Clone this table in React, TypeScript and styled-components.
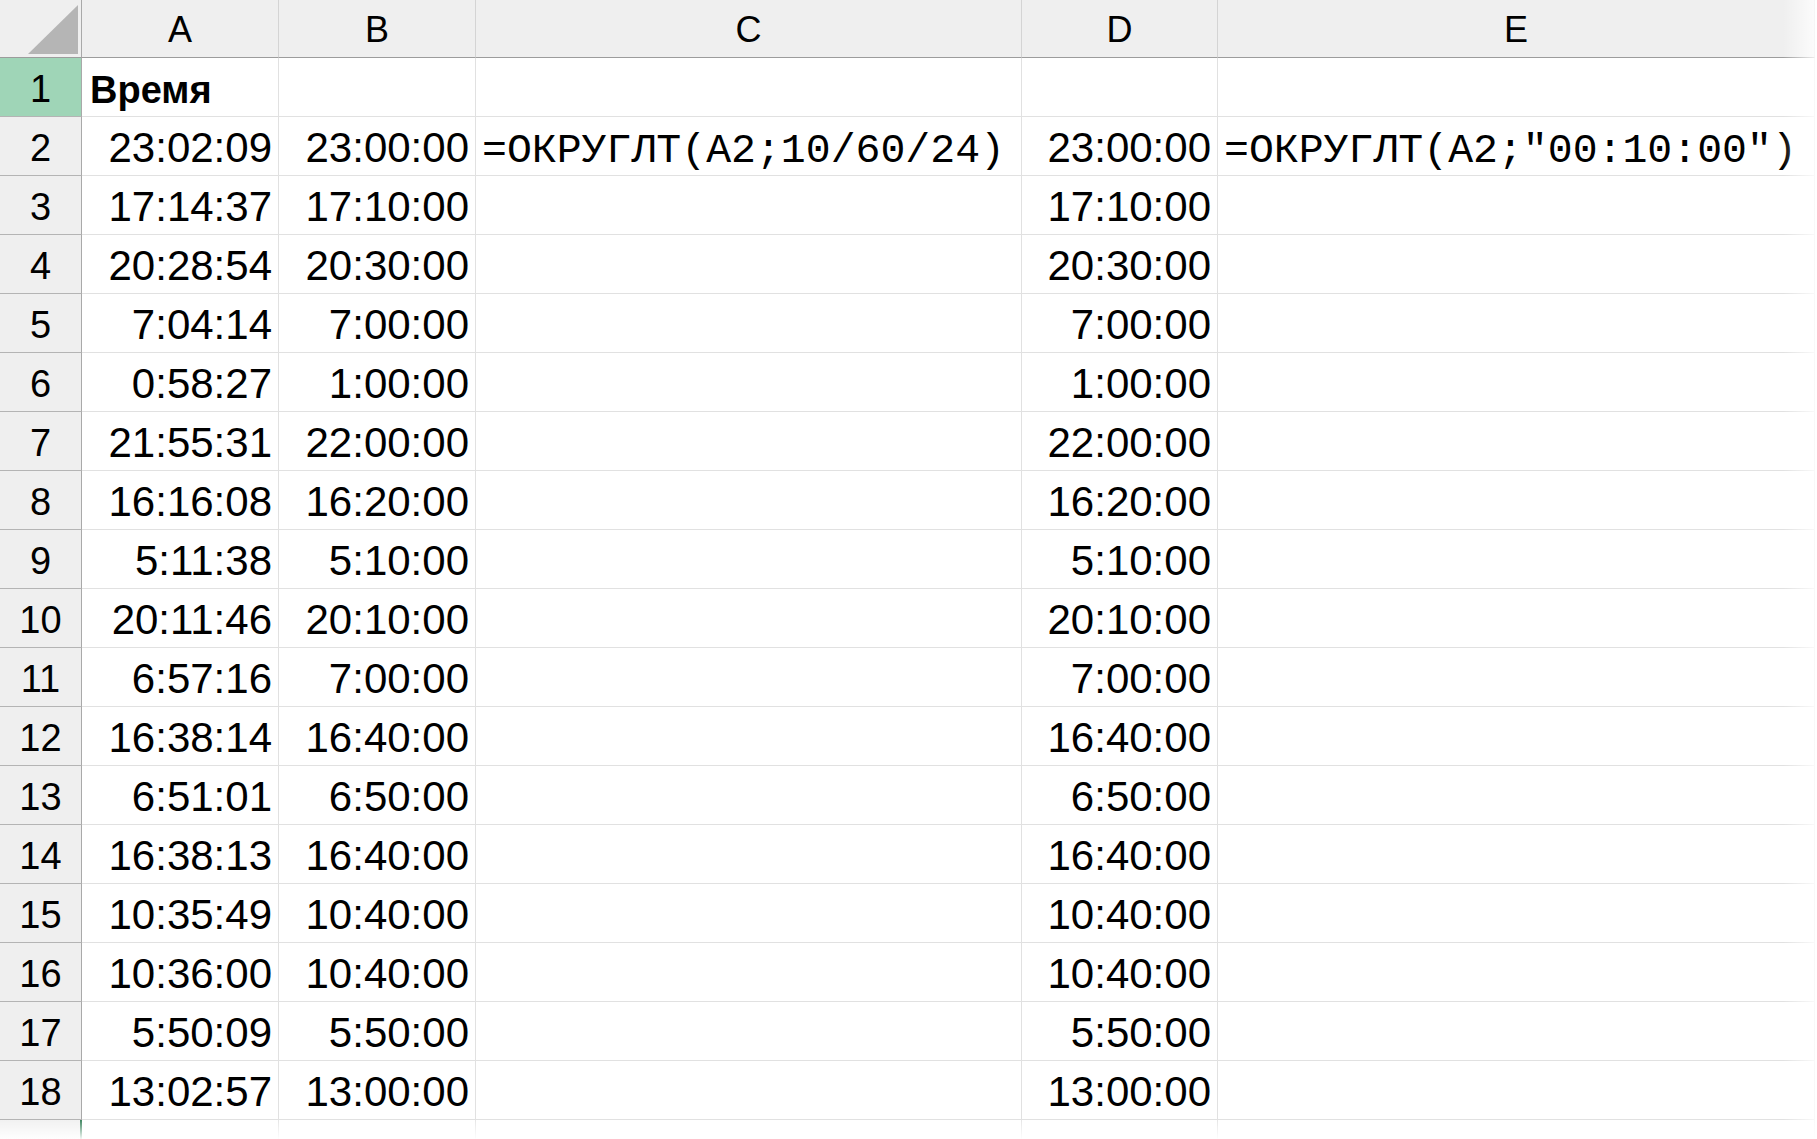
import React from "react";
import styled, { createGlobalStyle } from "styled-components";

const GlobalStyle = createGlobalStyle`
	html, body {
		margin: 0;
		padding: 0;
		background: #ffffff;
		overflow: hidden;
	}
`;

const SANS = `"Liberation Sans", Arial, sans-serif`;
const MONO = `"Liberation Mono", "Courier New", monospace`;

const Sheet = styled.div`
	position: relative;
	width: 1817px;
	height: 1139px;
	overflow: hidden;
	display: grid;
	grid-template-columns: 82px 197px 197px 546px 196px 597px;
	grid-template-rows: 58px repeat(19, 59px);
	background: #ffffff;
	font-family: ${SANS};
	color: #000000;
`;

const Corner = styled.div`
	box-sizing: border-box;
	display: flex;
	align-items: flex-end;
	justify-content: flex-end;
	padding: 0 3px 3px 0;
	background: #efefef;
	border-right: 1px solid #a9a9a9;
	border-bottom: 1px solid #9c9c9c;
`;

const CornerMark = styled.span`
	width: 50px;
	height: 49px;
	background: #b5b5b5;
	clip-path: polygon(100% 0, 100% 100%, 0 100%);
`;

const ColHeader = styled.div`
	box-sizing: border-box;
	display: flex;
	align-items: center;
	justify-content: center;
	padding-top: 2px;
	background: #efefef;
	border-right: 1px solid #d4d4d4;
	border-bottom: 1px solid #9c9c9c;
	font-size: 36px;
	line-height: 1;
`;

const RowHeader = styled.div<{ $selected?: boolean; $accent?: boolean }>`
	box-sizing: border-box;
	display: flex;
	align-items: center;
	justify-content: center;
	padding-top: 4px;
	background: ${(p) => (p.$selected ? "#9fd5b7" : "#efefef")};
	border-right: ${(p) => (p.$accent ? "2px solid #1e7145" : "1px solid #a9a9a9")};
	border-bottom: 1px solid #b4b4b4;
	font-size: 38px;
	line-height: 1;
`;

const Cell = styled.div<{ $align?: "left" | "right"; $bold?: boolean; $mono?: boolean }>`
	box-sizing: border-box;
	display: flex;
	align-items: flex-end;
	justify-content: ${(p) => (p.$align === "right" ? "flex-end" : "flex-start")};
	padding: 0 ${(p) => (p.$mono ? "4px" : "6px")} ${(p) => (p.$mono ? "0" : "3px")} ${(p) => (p.$mono ? "6px" : "8px")};
	border-right: 1px solid #e1e1e1;
	border-bottom: 1px solid #e1e1e1;
	font-family: ${(p) => (p.$mono ? MONO : SANS)};
	font-size: ${(p) => (p.$mono ? "41.5px" : p.$bold ? "38px" : "42px")};
	font-weight: ${(p) => (p.$bold ? 700 : 400)};
	white-space: nowrap;
	overflow: visible;
	line-height: 1.15;
	z-index: ${(p) => (p.$mono ? 1 : 0)};
`;

const RightFade = styled.div`
	position: absolute;
	top: 0;
	right: 0;
	width: 34px;
	height: 100%;
	pointer-events: none;
	background: linear-gradient(to right, rgba(255, 255, 255, 0), rgba(255, 255, 255, 0.85));
	z-index: 2;
`;

const BottomFade = styled.div`
	position: absolute;
	left: 0;
	bottom: 0;
	width: 100%;
	height: 19px;
	pointer-events: none;
	background: linear-gradient(to bottom, rgba(255, 255, 255, 0.15), rgba(255, 255, 255, 0.95));
	z-index: 2;
`;

const columns = ["A", "B", "C", "D", "E"];

// A, B, C (formula), D, E (formula)
const rows: string[][] = [
	["23:02:09", "23:00:00", "=ОКРУГЛТ(A2;10/60/24)", "23:00:00", '=ОКРУГЛТ(A2;"00:10:00")'],
	["17:14:37", "17:10:00", "", "17:10:00", ""],
	["20:28:54", "20:30:00", "", "20:30:00", ""],
	["7:04:14", "7:00:00", "", "7:00:00", ""],
	["0:58:27", "1:00:00", "", "1:00:00", ""],
	["21:55:31", "22:00:00", "", "22:00:00", ""],
	["16:16:08", "16:20:00", "", "16:20:00", ""],
	["5:11:38", "5:10:00", "", "5:10:00", ""],
	["20:11:46", "20:10:00", "", "20:10:00", ""],
	["6:57:16", "7:00:00", "", "7:00:00", ""],
	["16:38:14", "16:40:00", "", "16:40:00", ""],
	["6:51:01", "6:50:00", "", "6:50:00", ""],
	["16:38:13", "16:40:00", "", "16:40:00", ""],
	["10:35:49", "10:40:00", "", "10:40:00", ""],
	["10:36:00", "10:40:00", "", "10:40:00", ""],
	["5:50:09", "5:50:00", "", "5:50:00", ""],
	["13:02:57", "13:00:00", "", "13:00:00", ""],
];

const App = () => {
	return (
		<>
			<GlobalStyle />
			<Sheet>
				<Corner>
					<CornerMark />
				</Corner>
				{columns.map((c) => (
					<ColHeader key={"col_" + c}>{c}</ColHeader>
				))}

				<RowHeader $selected>1</RowHeader>
				<Cell $bold>Время</Cell>
				<Cell />
				<Cell />
				<Cell />
				<Cell />

				{rows.map((r, i) => (
					<React.Fragment key={"row_" + i}>
						<RowHeader>{i + 2}</RowHeader>
						<Cell $align="right">{r[0]}</Cell>
						<Cell $align="right">{r[1]}</Cell>
						<Cell $mono>{r[2]}</Cell>
						<Cell $align="right">{r[3]}</Cell>
						<Cell $mono>{r[4]}</Cell>
					</React.Fragment>
				))}

				<RowHeader $accent />
				<Cell />
				<Cell />
				<Cell />
				<Cell />
				<Cell />

				<RightFade />
				<BottomFade />
			</Sheet>
		</>
	);
};

export default App;
